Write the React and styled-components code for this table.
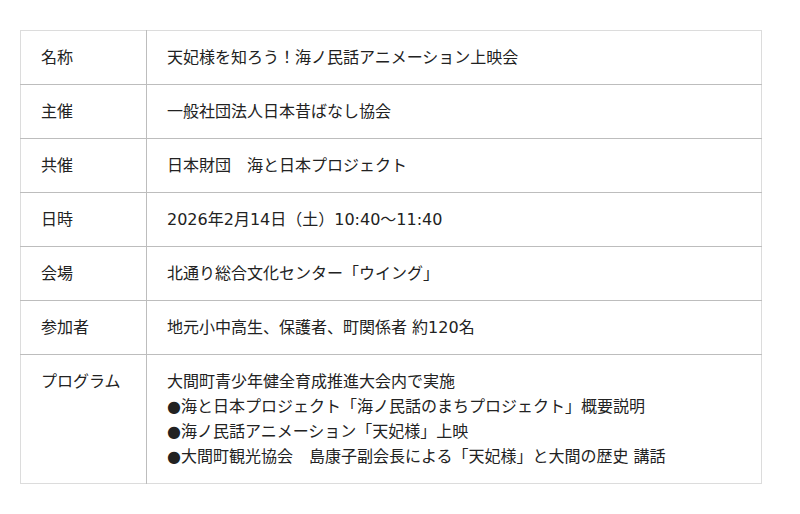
import React from "react";
import styled, { createGlobalStyle } from "styled-components";

const Global = createGlobalStyle`
  html, body { margin: 0; padding: 0; background: #fff; }
  body { font-family: "DejaVu Sans", "Noto Sans CJK JP", sans-serif; color: #222; }
`;

const Page = styled.div`
  padding: 30px 38px 0 20px;
`;

const Table = styled.table`
  width: 742px;
  border-collapse: collapse;
  border: 1px solid #dcdcdc;
  font-size: 16px;
  line-height: 25px;
`;

const Row = styled.tr`
  border-top: 1px solid #bdbdbd;
  &:first-child { border-top: 1px solid #dcdcdc; }
`;

const Label = styled.th`
  width: 126px;
  text-align: left;
  vertical-align: top;
  font-weight: normal;
  padding: 14px 20px 14px 20px;
  border-right: 1px solid #bdbdbd;
  box-sizing: border-box;
`;

const Value = styled.td`
  vertical-align: top;
  padding: 14px 20px;
`;

const Line = styled.div``;

const rows = [
  ["名称", ["天妃様を知ろう！海ノ民話アニメーション上映会"]],
  ["主催", ["一般社団法人日本昔ばなし協会"]],
  ["共催", ["日本財団　海と日本プロジェクト"]],
  ["日時", ["2026年2月14日（土）10:40〜11:40"]],
  ["会場", ["北通り総合文化センター「ウイング」"]],
  ["参加者", ["地元小中高生、保護者、町関係者 約120名"]],
  [
    "プログラム",
    [
      "大間町青少年健全育成推進大会内で実施",
      "●海と日本プロジェクト「海ノ民話のまちプロジェクト」概要説明",
      "●海ノ民話アニメーション「天妃様」上映",
      "●大間町観光協会　島康子副会長による「天妃様」と大間の歴史 講話",
    ],
  ],
];

export default function App() {
  return (
    <>
      <Global />
      <Page>
        <Table>
          <tbody>
            {rows.map(([label, lines]) => (
              <Row key={label}>
                <Label>{label}</Label>
                <Value>
                  {lines.map((l) => (
                    <Line key={l}>{l}</Line>
                  ))}
                </Value>
              </Row>
            ))}
          </tbody>
        </Table>
      </Page>
    </>
  );
}
